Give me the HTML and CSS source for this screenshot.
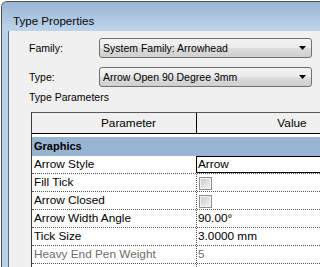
FILE: index.html
```html
<!DOCTYPE html>
<html lang="en">
<head>
    <meta charset="UTF-8">
    <meta name="viewport" content="width=device-width, initial-scale=1.0">
    <title>Type Properties</title>
    <link rel="stylesheet" href="styles.css">
</head>
<body>
    <div class="window">
        <div class="titlebar">Type Properties</div>
        <div class="frame">
            <div class="client">
                <div class="field">
                    <label class="field-label" for="family">Family:</label>
                    <div class="combo" id="family">
                        <span>System Family: Arrowhead</span>
                        <svg class="combo-arrow" width="7" height="4" viewBox="0 0 7 4"><path d="M0 0h7L3.5 4z" fill="#000"/></svg>
                    </div>
                </div>
                <div class="field">
                    <label class="field-label" for="type">Type:</label>
                    <div class="combo" id="type">
                        <span>Arrow Open 90 Degree 3mm</span>
                        <svg class="combo-arrow" width="7" height="4" viewBox="0 0 7 4"><path d="M0 0h7L3.5 4z" fill="#000"/></svg>
                    </div>
                </div>

                <div class="section-label">Type Parameters</div>

                <div class="grid">
                    <div class="grid-head">
                        <div class="head-name">Parameter</div>
                        <div class="head-value">Value</div>
                    </div>
                    <div class="group-row">Graphics</div>
                    <div class="row">
                        <div class="cell-name">Arrow Style</div>
                        <div class="cell-value editing">Arrow</div>
                    </div>
                    <div class="row">
                        <div class="cell-name">Fill Tick</div>
                        <div class="cell-value"><span class="checkbox"></span></div>
                    </div>
                    <div class="row">
                        <div class="cell-name">Arrow Closed</div>
                        <div class="cell-value"><span class="checkbox"></span></div>
                    </div>
                    <div class="row">
                        <div class="cell-name">Arrow Width Angle</div>
                        <div class="cell-value">90.00°</div>
                    </div>
                    <div class="row">
                        <div class="cell-name">Tick Size</div>
                        <div class="cell-value">3.0000 mm</div>
                    </div>
                    <div class="row disabled">
                        <div class="cell-name">Heavy End Pen Weight</div>
                        <div class="cell-value">5</div>
                    </div>
                    <div class="row">
                        <div class="cell-name"></div>
                        <div class="cell-value"></div>
                    </div>
                </div>
            </div>
        </div>
    </div>
</body>
</html>
```

FILE: styles.css
```css
body {
    margin: 0;
    width: 320px;
    height: 267px;
    overflow: hidden;
    background-color: #fff;
    font-family: "Liberation Sans", Arial, sans-serif;
    color: #000;
}

.window {
    margin: 1px 0 0 1px;
    height: 266px;
    border-top: 1px solid #4f4f4f;
    border-left: 1px solid #4f4f4f;
    border-top-left-radius: 6px;
    background-color: #b9d1ea;
    overflow: hidden;
}

.titlebar {
    box-sizing: border-box;
    height: 29px;
    padding: 11px 0 0 11px;
    font-size: 11.6px;
    line-height: 15px;
    color: #0a0a0a;
    background: linear-gradient(to bottom, #9ab5d3, #bed4ec);
}

.frame {
    padding-left: 6px;
}

.client {
    height: 236px;
    padding: 7px 0 0 20px;
    border-left: 1px solid #5d6a7a;
    background-color: #f0f0f0;
    font-size: 10.5px;
    overflow: hidden;
}

.field {
    display: flex;
    align-items: center;
    height: 20px;
    margin-bottom: 9px;
}

.field-label {
    width: 70px;
}

.combo {
    box-sizing: border-box;
    display: flex;
    align-items: center;
    justify-content: space-between;
    width: 213px;
    height: 20px;
    padding: 0 5px 0 3px;
    border: 1px solid #707070;
    border-radius: 3px;
    background: linear-gradient(to bottom, #f3f3f3 0%, #ebebeb 48%, #dddddd 52%, #cfcfcf 100%);
}

.combo-arrow {
    display: block;
}

.section-label {
    margin: -6px 0 7px 0;
    line-height: 15px;
}

.grid {
    margin-left: 2px;
    border-top: 1px solid #5a5a5a;
    border-left: 1px solid #3c3c3c;
    background-color: #fff;
    font-size: 11.8px;
}

.grid-head {
    display: flex;
    height: 21px;
    box-sizing: border-box;
    border-bottom: 1px solid #000;
    background-color: #f0f0f0;
    line-height: 20px;
}

.head-name {
    width: 164px;
    box-sizing: border-box;
    padding-left: 29px;
    text-align: center;
}

.head-value {
    flex: 1;
    padding-left: 67px;
    border-left: 1px solid #000;
    text-align: center;
}

.group-row {
    height: 19px;
    padding-left: 2px;
    border-top: 3px solid #fff;
    background-color: #99b4d1;
    font-weight: bold;
    font-size: 11px;
    line-height: 19px;
}

.row {
    display: flex;
    box-sizing: border-box;
    height: 18px;
    border-bottom: 1px dotted #555;
    line-height: 17px;
}

.cell-name {
    width: 164px;
    box-sizing: border-box;
    padding-left: 2px;
}

.cell-value {
    flex: 1;
    padding-left: 1px;
    border-left: 1px dotted #555;
}

.cell-value.editing {
    box-sizing: border-box;
    height: 17px;
    line-height: 15px;
    border: 1px solid #000;
    border-right: none;
}

.checkbox {
    display: block;
    box-sizing: border-box;
    width: 13px;
    height: 13px;
    margin: 3px 0 0 1px;
    border: 1px solid #8e8f8f;
    box-shadow: inset 0 0 0 1px #f2f2f2;
    background: linear-gradient(135deg, #c9c9c9, #f5f5f5);
}

.disabled {
    color: #6d6d6d;
}
```
